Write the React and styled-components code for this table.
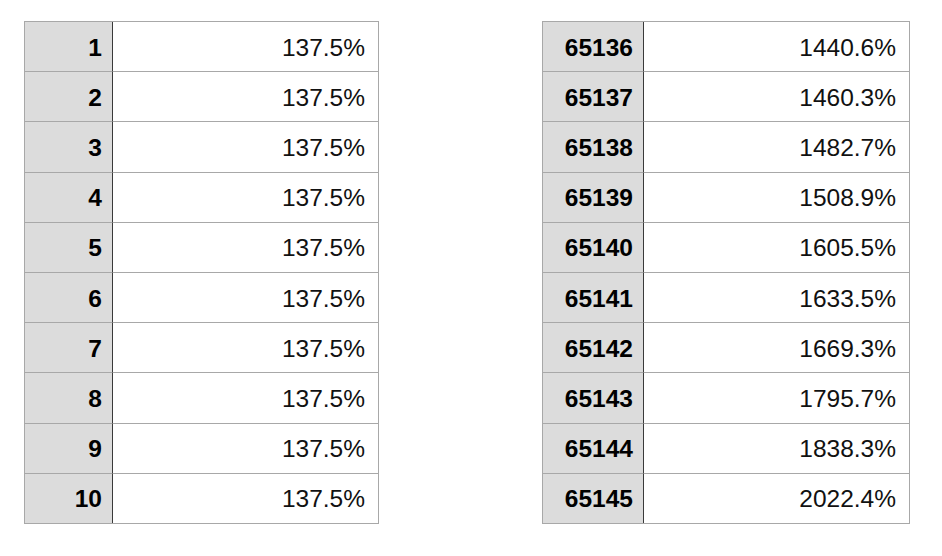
import React from 'react';
import styled, { createGlobalStyle } from 'styled-components';

const GlobalStyle = createGlobalStyle`
    body {
        margin: 0;
        background: #ffffff;
        font-family: "Liberation Sans", Arial, Helvetica, sans-serif;
    }
`;

const Page = styled.div`
    display: flex;
    align-items: flex-start;
    gap: 163px;
    padding: 21px 0 0 24px;
    width: 942px;
    height: 556px;
    box-sizing: border-box;
`;

const Table = styled.div`
    display: grid;
    grid-template-columns: ${({ keyWidth }) => keyWidth}px 265px;
    border: 1px solid #a8a8a8;
`;

const KeyCell = styled.div`
    display: flex;
    align-items: center;
    justify-content: flex-end;
    height: ${({ first }) => (first ? '49.2px' : '50.2px')};
    padding: 2px 10px 0 0;
    box-sizing: border-box;
    background: #dcdcdc;
    border-right: 1px solid #3a3a3a;
    border-top: ${({ first }) => (first ? 'none' : '1px solid #a8a8a8')};
    font-size: 24.5px;
    font-weight: bold;
    color: #000;
`;

const ValueCell = styled.div`
    display: flex;
    align-items: center;
    justify-content: flex-end;
    height: ${({ first }) => (first ? '49.2px' : '50.2px')};
    padding: 2px 13px 0 0;
    box-sizing: border-box;
    background: #ffffff;
    border-top: ${({ first }) => (first ? 'none' : '1px solid #a8a8a8')};
    font-size: 24.5px;
    color: #111;
`;

const left = Array.from({ length: 10 }, (_, i) => [String(i + 1), '137.5%']);

const right = [
    ['65136', '1440.6%'],
    ['65137', '1460.3%'],
    ['65138', '1482.7%'],
    ['65139', '1508.9%'],
    ['65140', '1605.5%'],
    ['65141', '1633.5%'],
    ['65142', '1669.3%'],
    ['65143', '1795.7%'],
    ['65144', '1838.3%'],
    ['65145', '2022.4%'],
];

function DataTable({ rows, keyWidth }) {
    return (
        <Table keyWidth={keyWidth}>
            {rows.map(([k, v], i) => (
                <React.Fragment key={k}>
                    <KeyCell first={i === 0}>{k}</KeyCell>
                    <ValueCell first={i === 0}>{v}</ValueCell>
                </React.Fragment>
            ))}
        </Table>
    );
}

export default function App() {
    return (
        <>
            <GlobalStyle />
            <Page>
                <DataTable rows={left} keyWidth={88} />
                <DataTable rows={right} keyWidth={101} />
            </Page>
        </>
    );
}
